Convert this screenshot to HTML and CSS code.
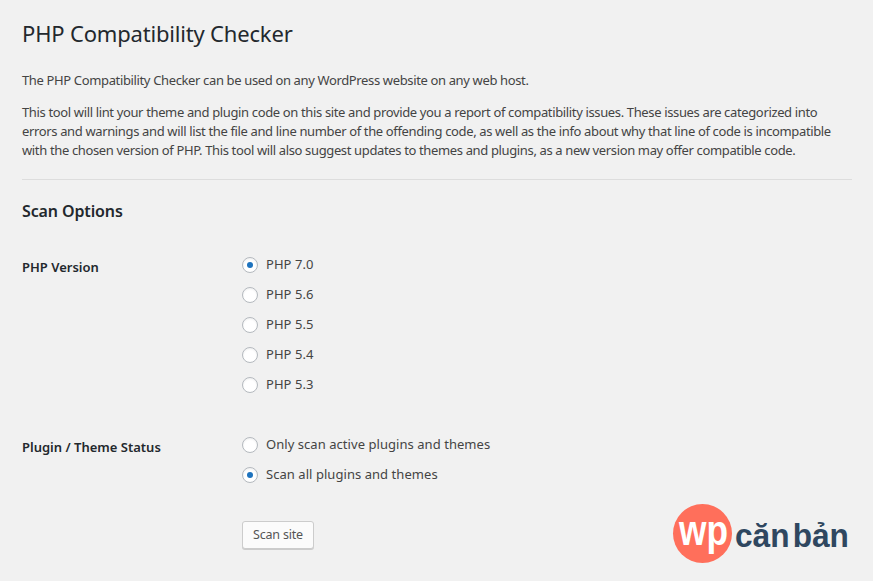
FILE: index.html
```html
<!DOCTYPE html>
<html lang="en">
<head>
<meta charset="utf-8">
<title>PHP Compatibility Checker</title>
<link rel="stylesheet" href="styles.css">
</head>
<body>
<main class="wrap">
  <h1 class="title">PHP Compatibility Checker</h1>
  <p class="intro">The PHP Compatibility Checker can be used on any WordPress website on any web host.</p>
  <p class="desc">This tool will lint your theme and plugin code on this site and provide you a report of compatibility issues. These issues are categorized into errors and warnings and will list the file and line number of the offending code, as well as the info about why that line of code is incompatible with the chosen version of PHP. This tool will also suggest updates to themes and plugins, as a new version may offer compatible code.</p>
  <hr class="rule">
  <h2 class="subtitle">Scan Options</h2>
  <div class="option-row version-row">
    <div class="option-label">PHP Version</div>
    <div class="choices">
      <label class="choice"><span class="radio checked"></span>PHP 7.0</label>
      <label class="choice"><span class="radio"></span>PHP 5.6</label>
      <label class="choice"><span class="radio"></span>PHP 5.5</label>
      <label class="choice"><span class="radio"></span>PHP 5.4</label>
      <label class="choice"><span class="radio"></span>PHP 5.3</label>
    </div>
  </div>
  <div class="option-row status-row">
    <div class="option-label">Plugin / Theme Status</div>
    <div class="choices">
      <label class="choice"><span class="radio"></span>Only scan active plugins and themes</label>
      <label class="choice"><span class="radio checked"></span>Scan all plugins and themes</label>
    </div>
  </div>
  <div class="actions"><button class="button" type="button">Scan site</button></div>
</main>
<div class="logo">
  <span class="logo-badge"><span class="logo-wp">wp</span></span>
  <span class="logo-text">căn bản</span>
</div>
</body>
</html>
```
FILE: styles.css
```css
html, body { margin: 0; padding: 0; height: 581px; overflow: hidden; }
body {
  background: #f1f1f1;
  color: #444;
  font-family: "Noto Sans", sans-serif;
  font-size: 13px;
  line-height: 19px;
  position: relative;
}
.wrap { padding: 0 21px 0 22px; }
.title {
  margin: 0;
  padding-top: 18px;
  font-size: 22px;
  line-height: 30px;
  font-weight: 400;
  color: #23282d;
  letter-spacing: -0.18px;
}
.intro, .desc { margin: 0; letter-spacing: -0.36px; }
.intro { padding-top: 23px; }
.desc { padding-top: 13px; }
.rule { border: 0; border-top: 1px solid #ddd; margin: 19px 0 0; }
.subtitle {
  margin: 0;
  padding-top: 21px;
  font-size: 16px;
  line-height: 20px;
  font-weight: 600;
  color: #23282d;
  letter-spacing: -0.12px;
}
.option-row { display: flex; }
.version-row { padding-top: 34px; }
.status-row { padding-top: 41px; }
.option-label {
  width: 220px;
  flex: none;
  padding-top: 3px;
  font-weight: 600;
  color: #23282d;
  letter-spacing: 0;
}
.choices { display: flex; flex-direction: column; gap: 11px; }
.choice { display: flex; align-items: center; height: 19px; letter-spacing: 0.05px; }
.radio {
  box-sizing: border-box;
  width: 16px;
  height: 16px;
  margin-right: 8px;
  border: 1px solid #b4b9be;
  border-radius: 50%;
  background: #fff;
  box-shadow: inset 0 1px 2px rgba(0,0,0,.07);
  display: flex;
  align-items: center;
  justify-content: center;
}
.radio.checked::before {
  content: "";
  width: 6px;
  height: 6px;
  border-radius: 50%;
  background: #1e73be;
}
.actions { padding: 37px 0 0 220px; }
.button {
  display: block;
  box-sizing: border-box;
  width: 72px;
  height: 28px;
  padding: 0;
  border: 1px solid #ccc;
  border-radius: 3px;
  background: #fbfbfb;
  box-shadow: 0 1px 0 #ccc;
  color: #555;
  font: 12.5px/26px "Noto Sans", sans-serif;
  letter-spacing: -0.2px;
}
.logo {
  position: absolute;
  left: 673px;
  top: 504px;
  width: 180px;
  height: 59px;
}
.logo-badge {
  position: absolute;
  left: 0;
  top: 0;
  width: 59px;
  height: 59px;
  border-radius: 50%;
  background: #ff6f5b;
}
.logo-wp {
  position: absolute;
  left: 6px;
  top: 2px;
  color: #fff;
  font: 700 42px/50px "Liberation Sans", sans-serif;
  transform: scaleX(.84);
  transform-origin: left top;
}
.logo-text {
  position: absolute;
  left: 62px;
  top: 11px;
  color: #2f4760;
  font: 700 34px/40px "Liberation Sans", sans-serif;
  white-space: nowrap;
  word-spacing: -6px;
  transform: scaleX(.93);
  transform-origin: left top;
}
```
